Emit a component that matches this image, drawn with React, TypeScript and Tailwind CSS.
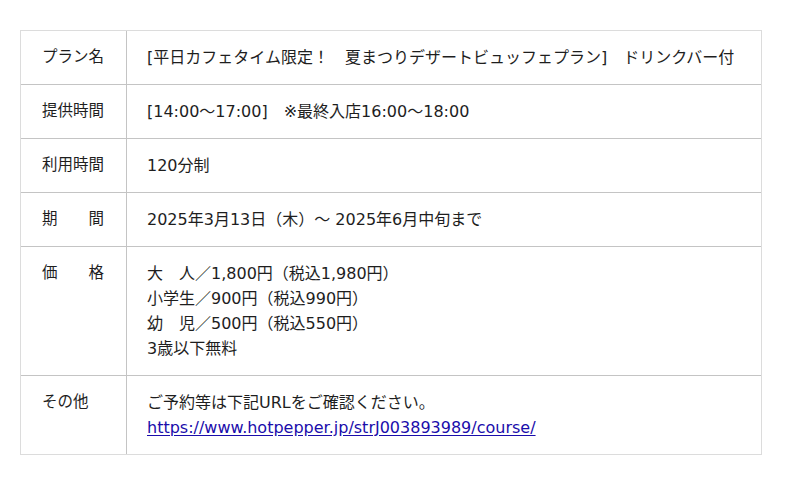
const rows: { label: string; lines: React.ReactNode[] }[] = [
  {
    label: "プラン名",
    lines: ["[平日カフェタイム限定！　夏まつりデザートビュッフェプラン]　ドリンクバー付"],
  },
  { label: "提供時間", lines: ["[14:00～17:00]　※最終入店16:00～18:00"] },
  { label: "利用時間", lines: ["120分制"] },
  { label: "期　　間", lines: ["2025年3月13日（木）～ 2025年6月中旬まで"] },
  {
    label: "価　　格",
    lines: [
      "大　人／1,800円（税込1,980円）",
      "小学生／900円（税込990円）",
      "幼　児／500円（税込550円）",
      "3歳以下無料",
    ],
  },
  {
    label: "その他",
    lines: [
      "ご予約等は下記URLをご確認ください。",
      <a
        key="url"
        href="#"
        className="text-[#1a0dab] underline underline-offset-2"
      >
        https://www.hotpepper.jp/strJ003893989/course/
      </a>,
    ],
  },
];

export default function App() {
  return (
    <div
      className="min-h-[485px] w-[800px] bg-white pl-5 pt-[30px] text-[#1e1e1e]"
      style={{ fontFamily: '"DejaVu Sans", "Noto Sans CJK JP", sans-serif' }}
    >
      <div className="w-[742px] border border-[#dcdcdc]">
        {rows.map((row, i) => (
          <div
            key={row.label}
            className={`flex ${i < rows.length - 1 ? "border-b border-[#c4c4c4]" : ""}`}
          >
            {/* label cell */}
            <div className="w-[106px] shrink-0 border-r border-[#c4c4c4] py-[14px] pl-[21px] text-[15.5px] leading-[25px]">
              {row.label}
            </div>
            <div className="flex-1 py-[14px] pl-[20px] text-[16px] leading-[25px]">
              {row.lines.map((line, j) => (
                <div key={j}>{line}</div>
              ))}
            </div>
          </div>
        ))}
      </div>
    </div>
  );
}
